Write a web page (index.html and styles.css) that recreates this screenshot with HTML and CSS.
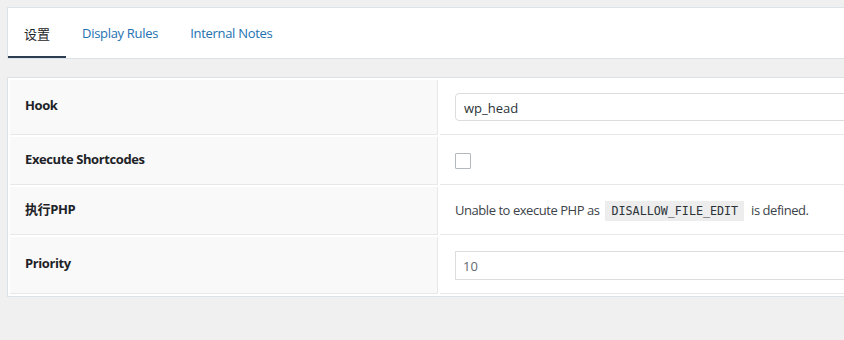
FILE: index.html
```html
<!DOCTYPE html>
<html lang="zh-CN">
<head>
    <meta charset="UTF-8">
    <meta name="viewport" content="width=device-width, initial-scale=1.0">
    <title>Snippet Settings</title>
    <link rel="stylesheet" href="styles.css">
</head>
<body>
    <div class="page">
        <!-- Tabs -->
        <nav class="tabs">
            <a class="tab active" href="#">设置</a>
            <a class="tab" href="#">Display Rules</a>
            <a class="tab" href="#">Internal Notes</a>
        </nav>

        <!-- Settings table -->
        <div class="panel">
            <table class="settings">
                <tr class="row-hook">
                    <th>Hook</th>
                    <td><input class="text-input" type="text" value="wp_head"></td>
                </tr>
                <tr class="row-short">
                    <th>Execute Shortcodes</th>
                    <td><input class="check" type="checkbox"></td>
                </tr>
                <tr class="row-short">
                    <th>执行PHP</th>
                    <td class="note">Unable to execute PHP as <code>DISALLOW_FILE_EDIT</code> is defined.</td>
                </tr>
                <tr class="row-priority">
                    <th>Priority</th>
                    <td><input class="number-input" type="text" value="10"></td>
                </tr>
            </table>
        </div>
    </div>
</body>
</html>
```

FILE: styles.css
```css
:root {
    --bg: #f0f0f1;
    --panel-border: #dce3e8;
    --text: #1d2327;
    --link: #2271b1;
    --tab-active: #2c3e50;
    --label-bg: #f9f9f9;
    --cell-border: #e8e8e8;
}

* {
    margin: 0;
    padding: 0;
    box-sizing: border-box;
}

body {
    font-family: 'Open Sans', 'Noto Sans CJK SC', sans-serif;
    font-size: 13px;
    color: var(--text);
    background: var(--bg);
    overflow: hidden;
}

.page {
    width: 1100px;
    padding: 7px;
}

/* Tabs */
.tabs {
    display: flex;
    height: 52px;
    background: #fff;
    border: 1px solid var(--panel-border);
}

.tab {
    display: flex;
    align-items: center;
    padding: 2px 16px 0;
    color: var(--link);
    text-decoration: none;
    letter-spacing: -0.3px;
    border-bottom: 2px solid transparent;
}

.tab.active {
    color: var(--text);
    letter-spacing: 0;
    border-bottom-color: var(--tab-active);
}

/* Panel */
.panel {
    margin-top: 18px;
    background: #fff;
    border: 1px solid var(--panel-border);
}

.settings {
    width: 100%;
    border-spacing: 2px;
}

.settings th,
.settings td {
    padding: 0 15px;
    vertical-align: middle;
    text-align: left;
    border-bottom: 1px solid var(--cell-border);
}

.settings th {
    width: 428px;
    padding-bottom: 4px;
    background: var(--label-bg);
    border-right: 1px solid var(--cell-border);
    font-weight: 700;
    letter-spacing: -0.4px;
}

.row-hook th { height: 55px; }
.row-short th { height: 48px; }
.row-priority th { height: 57px; }

.text-input,
.number-input {
    display: block;
    width: 100%;
    height: 28px;
    padding: 2px 8px 0;
    font: inherit;
    font-size: 13px;
    color: #2c3338;
    background: #fff;
    border: 1px solid #dcdcde;
    border-radius: 4px;
    outline: none;
}

.number-input {
    height: 29px;
    margin-top: 1px;
    padding: 0 7px;
    border-radius: 0;
    border-color: #dddddd;
    color: #646970;
}

.check {
    appearance: none;
    display: block;
    width: 16px;
    height: 16px;
    border: 1px solid #b4b9be;
    border-radius: 1px;
    background: #fff;
}

.note {
    color: #3c434a;
    letter-spacing: -0.45px;
}

.note code {
    display: inline-block;
    margin: 0 4px 0 3px;
    padding: 3px 6px 2px;
    font-family: 'DejaVu Sans Mono', monospace;
    font-size: 11.7px;
    line-height: 15px;
    letter-spacing: 0;
    color: #2c3338;
    background: #ededed;
}
```
